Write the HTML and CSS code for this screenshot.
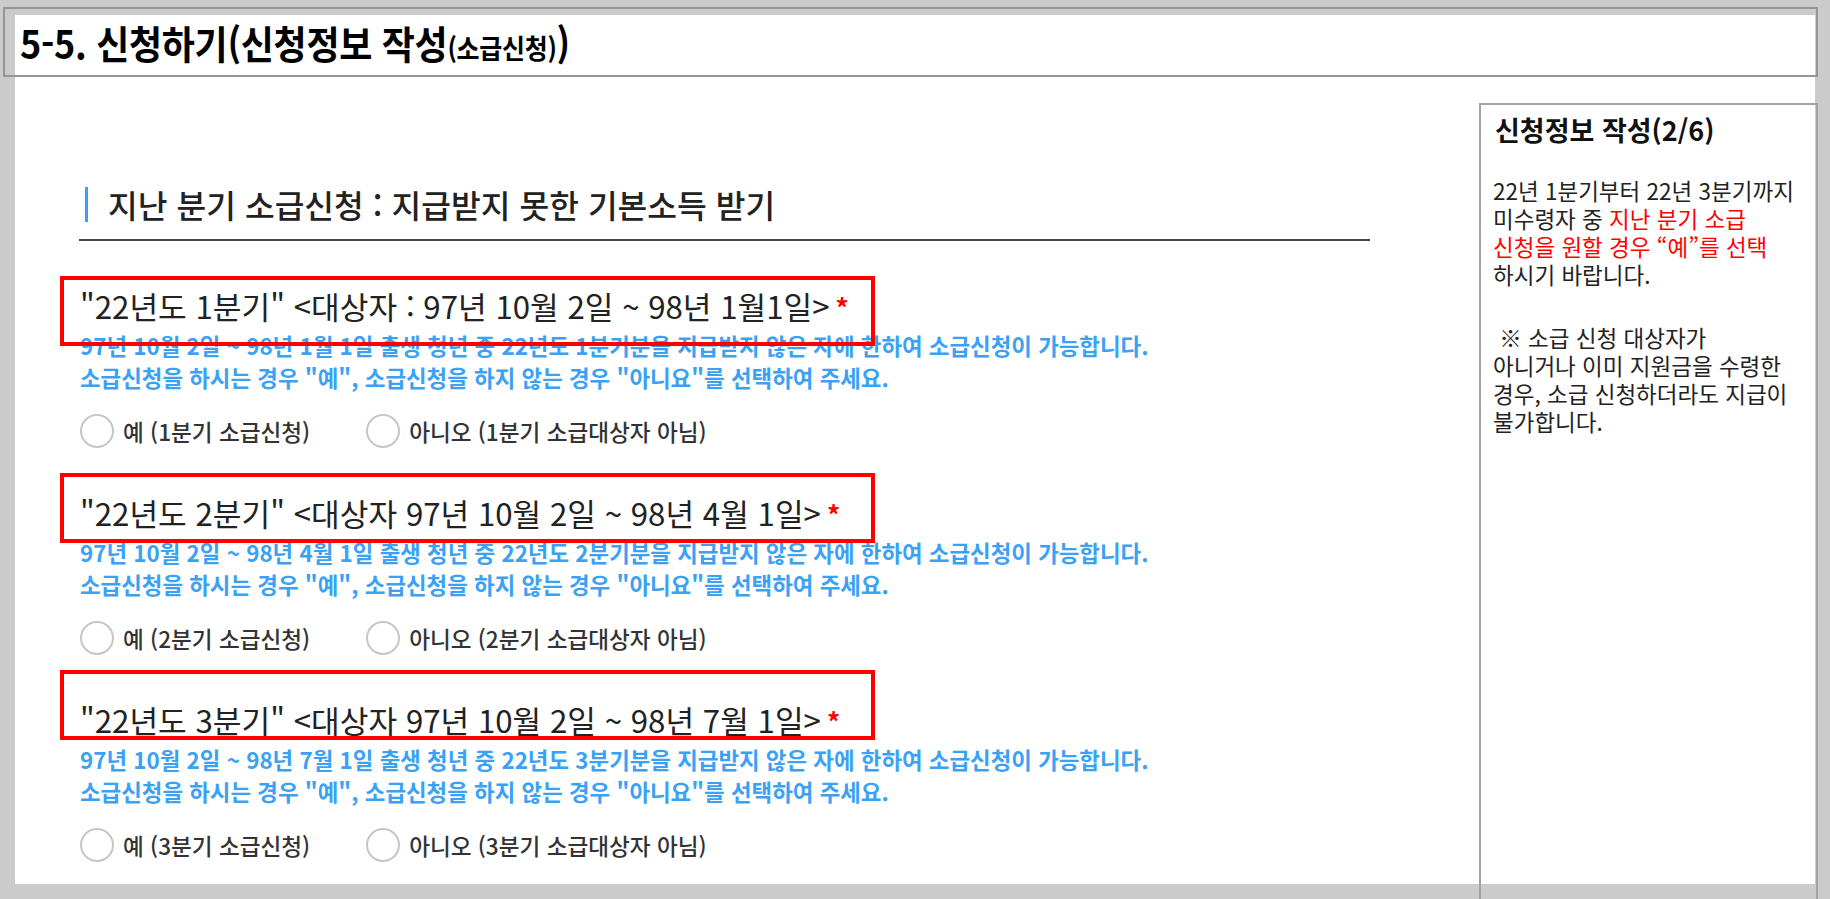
FILE: index.html
```html
<!DOCTYPE html>
<html lang="ko">
<head>
<meta charset="utf-8">
<title>5-5. 신청하기</title>
<link rel="stylesheet" href="styles.css">
</head>
<body>
<div class="page">
  <div class="header">
    <h1 class="page-title">5-5. 신청하기(신청정보 작성<span class="small">(소급신청)</span>)</h1>
  </div>
  <div class="main">
    <div class="content">
      <h2 class="section-title"><span class="bar"></span><span>지난 분기 소급신청 : 지급받지 못한 기본소득 받기</span></h2>

      <div class="block">
        <div class="q-title">"22년도 1분기" &lt;대상자 : 97년 10월 2일 ~ 98년 1월1일&gt;<span class="req">*</span></div>
        <p class="desc">97년 10월 2일 ~ 98년 1월 1일 출생 청년 중 22년도 1분기분을 지급받지 않은 자에 한하여 소급신청이 가능합니다.<br>소급신청을 하시는 경우 "예", 소급신청을 하지 않는 경우 "아니요"를 선택하여 주세요.</p>
        <div class="radios">
          <label class="radio"><span class="circle"></span><span>예 (1분기 소급신청)</span></label>
          <label class="radio"><span class="circle"></span><span>아니오 (1분기 소급대상자 아님)</span></label>
        </div>
      </div>

      <div class="block">
        <div class="q-title">"22년도 2분기" &lt;대상자 97년 10월 2일 ~ 98년 4월 1일&gt;<span class="req">*</span></div>
        <p class="desc">97년 10월 2일 ~ 98년 4월 1일 출생 청년 중 22년도 2분기분을 지급받지 않은 자에 한하여 소급신청이 가능합니다.<br>소급신청을 하시는 경우 "예", 소급신청을 하지 않는 경우 "아니요"를 선택하여 주세요.</p>
        <div class="radios">
          <label class="radio"><span class="circle"></span><span>예 (2분기 소급신청)</span></label>
          <label class="radio"><span class="circle"></span><span>아니오 (2분기 소급대상자 아님)</span></label>
        </div>
      </div>

      <div class="block">
        <div class="q-title">"22년도 3분기" &lt;대상자 97년 10월 2일 ~ 98년 7월 1일&gt;<span class="req">*</span></div>
        <p class="desc">97년 10월 2일 ~ 98년 7월 1일 출생 청년 중 22년도 3분기분을 지급받지 않은 자에 한하여 소급신청이 가능합니다.<br>소급신청을 하시는 경우 "예", 소급신청을 하지 않는 경우 "아니요"를 선택하여 주세요.</p>
        <div class="radios">
          <label class="radio"><span class="circle"></span><span>예 (3분기 소급신청)</span></label>
          <label class="radio"><span class="circle"></span><span>아니오 (3분기 소급대상자 아님)</span></label>
        </div>
      </div>
    </div>

    <aside class="sidebar">
      <h3 class="side-title">신청정보 작성(2/6)</h3>
      <p class="side-text">22년 1분기부터 22년 3분기까지<br>미수령자 중 <span class="red">지난 분기 소급</span><br><span class="red">신청을 원할 경우 “예”를 선택</span><br>하시기 바랍니다.</p>
      <p class="side-text second">&nbsp;※ 소급 신청 대상자가<br>아니거나 이미 지원금을 수령한<br>경우, 소급 신청하더라도 지급이<br>불가합니다.</p>
    </aside>
  </div>

  <div class="mark m1"></div>
  <div class="mark m2"></div>
  <div class="mark m3"></div>
</div>
</body>
</html>
```

FILE: styles.css
```css
* { box-sizing: border-box; }

html, body {
  margin: 0;
  height: 899px;
  overflow: hidden;
}

body {
  background: #cbcbcb;
  padding: 15px;
  font-family: "Noto Sans CJK KR", "Noto Sans", sans-serif;
  color: #222;
}

.page {
  position: relative;
  background: #fff;
  height: 869px;
  display: flex;
  flex-direction: column;
}

.header {
  margin: -8px -3px 0 -12px;
  height: 70px;
  border: 2px solid #959595;
  display: flex;
  align-items: center;
  padding-left: 15px;
  flex-shrink: 0;
}

.page-title {
  margin: 0;
  font-size: 36px;
  font-weight: 700;
  color: #000;
  line-height: 1;
  letter-spacing: -0.3px;
  transform: scaleY(1.08);
}

.page-title .small {
  font-size: 25px;
}

.main {
  display: flex;
  flex: 1;
  min-height: 0;
}

.content {
  flex: 1;
  padding-left: 64px;
}

.section-title {
  width: 1291px;
  margin: 109px 0 0;
  padding: 0 0 17px 6px;
  border-bottom: 2px solid #444;
  display: flex;
  align-items: center;
  gap: 20px;
  font-size: 32.3px;
  font-weight: 500;
  line-height: 36px;
  color: #222;
}

.section-title .bar {
  width: 3px;
  height: 35px;
  background: #3d9ef5;
}

.block {
  margin-top: 45px;
  padding-left: 1px;
}

.q-title {
  font-size: 31.2px;
  line-height: 40px;
  font-weight: 400;
  color: #222;
}

.req {
  color: #f00;
  font-size: 26px;
  font-weight: 700;
  margin-left: 6px;
  vertical-align: 1px;
}

.desc {
  margin: 2px 0 0;
  font-size: 22.4px;
  line-height: 32px;
  font-weight: 700;
  color: #3ba1f5;
}

.radios {
  margin-top: 21px;
  display: flex;
  gap: 56px;
  height: 34px;
  align-items: center;
}

.radio {
  display: flex;
  align-items: center;
  gap: 9px;
  font-size: 22.6px;
  font-weight: 500;
  color: #333;
}

.circle {
  width: 34px;
  height: 34px;
  border-radius: 50%;
  border: 2px solid #c6c6c6;
  background: #fff;
  flex-shrink: 0;
}

.sidebar {
  width: 339px;
  height: 820px;
  margin: 26px -3px 0 0;
  border: 2px solid #a3a3a3;
  border-bottom: none;
  padding: 8px 8px 0 14px;
  flex-shrink: 0;
}

.side-title {
  margin: 0;
  font-size: 27px;
  font-weight: 700;
  line-height: 34px;
  color: #111;
}

.side-text {
  margin: 29px 0 0 -2px;
  font-size: 22.5px;
  line-height: 28px;
  font-weight: 400;
  color: #222;
  white-space: nowrap;
}

.side-text.second {
  margin-top: 35px;
}

.red { color: #f00; }

.mark {
  position: absolute;
  left: 45px;
  width: 815px;
  height: 70px;
  border: 4px solid #f00;
}

.m1 { top: 261px; }
.m2 { top: 458px; }
.m3 { top: 655px; }
```
